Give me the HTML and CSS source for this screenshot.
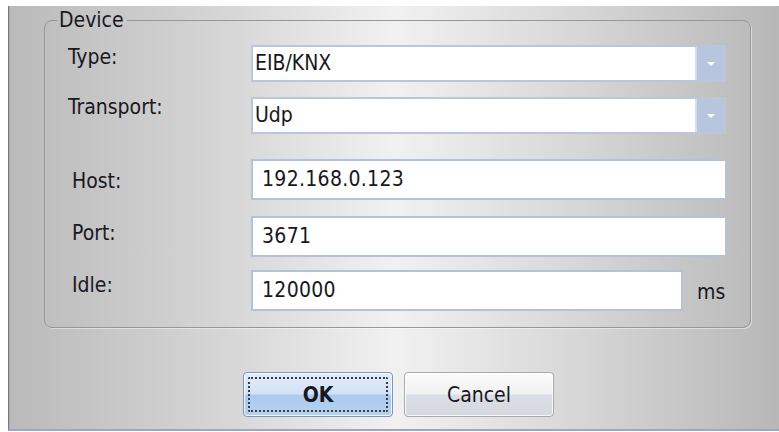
FILE: index.html
```html
<!DOCTYPE html>
<html>
<head>
<meta charset="utf-8">
<title>Device settings</title>
<link rel="stylesheet" href="styles.css">
</head>
<body>
<div class="dialog">
  <fieldset class="group">
    <legend class="group-title">Device</legend>

    <div class="row row-type">
      <span class="label label-wide">Type:</span>
      <div class="combo">
        <span class="combo-value">EIB/KNX</span>
        <span class="combo-btn"><i class="arrow"></i></span>
      </div>
    </div>

    <div class="row row-transport">
      <span class="label label-wide">Transport:</span>
      <div class="combo">
        <span class="combo-value">Udp</span>
        <span class="combo-btn"><i class="arrow"></i></span>
      </div>
    </div>

    <div class="row row-host">
      <span class="label">Host:</span>
      <div class="field">192.168.0.123</div>
    </div>

    <div class="row row-port">
      <span class="label">Port:</span>
      <div class="field">3671</div>
    </div>

    <div class="row row-idle">
      <span class="label">Idle:</span>
      <div class="field field-short">120000</div>
      <span class="unit">ms</span>
    </div>
  </fieldset>

  <div class="actions">
    <button class="btn btn-default" type="button"><span class="focus-ring">OK</span></button>
    <button class="btn" type="button"><span class="btn-text">Cancel</span></button>
  </div>
</div>
</body>
</html>
```

FILE: styles.css
```css
html, body {
  margin: 0;
  padding: 0;
  background: #ffffff;
}

body {
  font-family: "DejaVu Sans Condensed", "DejaVu Sans", sans-serif;
  font-size: 21px;
  line-height: 24px;
  color: #181822;
}

/* dialog client area */
.dialog {
  margin: 6px 0 0 8px;
  width: 771px;
  height: 423px;
  box-sizing: content-box;
  border-left: 1px solid #7c7c7c;
  border-bottom: 2px solid #9ea8bd;
  box-shadow: inset 1px 0 0 #a9a9a9;
  background: linear-gradient(to right, #bababa 0%, #d6d6d6 28%, #f1f1f1 50%, #d9d9d9 72%, #b7b7b7 100%);
  overflow: hidden;
  display: flex;
  flex-direction: column;
}

/* group box */
.group {
  margin: 2px 0 0 35px;
  width: 707px;
  box-sizing: border-box;
  padding: 13px 0 16px 0;
  border: 1px solid #979797;
  border-radius: 8px;
  box-shadow: 1px 1px 0 rgba(255, 255, 255, 0.45);
  min-width: 0;
}

.group-title {
  margin-left: 12px;
  padding: 0 3px 0 2px;
  line-height: 24px;
}

.row {
  display: flex;
  align-items: flex-start;
}

.row-transport { margin-top: 15px; }
.row-host { margin-top: 25px; }
.row-port { margin-top: 16px; }
.row-idle { margin-top: 13px; }

.label {
  width: 206px;
  flex: none;
  box-sizing: border-box;
  padding-left: 27px;
}

.label-wide { padding-left: 23px; }

.row-type .label { margin-top: 0; }
.row-transport .label { margin-top: -2px; }
.row-host .label { margin-top: 10px; }
.row-port .label { margin-top: 5px; }
.row-idle .label { margin-top: 3px; }

/* drop-down boxes */
.combo {
  width: 475px;
  height: 37px;
  box-sizing: border-box;
  display: flex;
  background: #ffffff;
  border: 2px solid #bcc6d6;
}

.combo-value {
  flex: 1;
  padding: 0 0 0 2px;
  line-height: 33px;
}

.combo-btn {
  width: 27px;
  flex: none;
  background: #b8c5de;
  border-left: 2px solid #d6deec;
  display: flex;
  align-items: center;
  justify-content: center;
}

.arrow {
  width: 0;
  height: 0;
  border-left: 4px solid transparent;
  border-right: 4px solid transparent;
  border-top: 4px solid #ffffff;
}

/* text fields */
.field {
  width: 476px;
  height: 41px;
  box-sizing: border-box;
  background: #ffffff;
  border: 2px solid #b4c1d6;
  padding-left: 9px;
  line-height: 36px;
  letter-spacing: 0.3px;
}

.field-short { width: 432px; }

.unit {
  margin: 10px 0 0 14px;
}

/* dialog buttons */
.actions {
  display: flex;
  gap: 11px;
  margin-top: 44px;
  padding-left: 234px;
}

.btn {
  width: 150px;
  height: 45px;
  box-sizing: border-box;
  font-family: inherit;
  font-size: 21px;
  color: #181822;
  border: 1px solid #a9a9a9;
  border-radius: 4px;
  background: linear-gradient(to bottom, #fbfbfb 0%, #f1f1f1 48%, #dcdfe5 52%, #d4d8df 100%);
  box-shadow: inset 0 0 0 1px rgba(255, 255, 255, 0.8);
  padding: 4px;
  display: flex;
}

.btn-text,
.focus-ring {
  flex: 1;
  display: flex;
  align-items: center;
  justify-content: center;
  border: 1px solid transparent;
  border-radius: 2px;
}

.btn-default {
  font-weight: bold;
  border-color: #7d97bc;
  background: linear-gradient(to bottom, #e3edfa 0%, #d2e2f6 48%, #abcaef 52%, #b6d2f2 100%);
}

.focus-ring {
  border: 2px dotted #3c3c3c;
}
```
